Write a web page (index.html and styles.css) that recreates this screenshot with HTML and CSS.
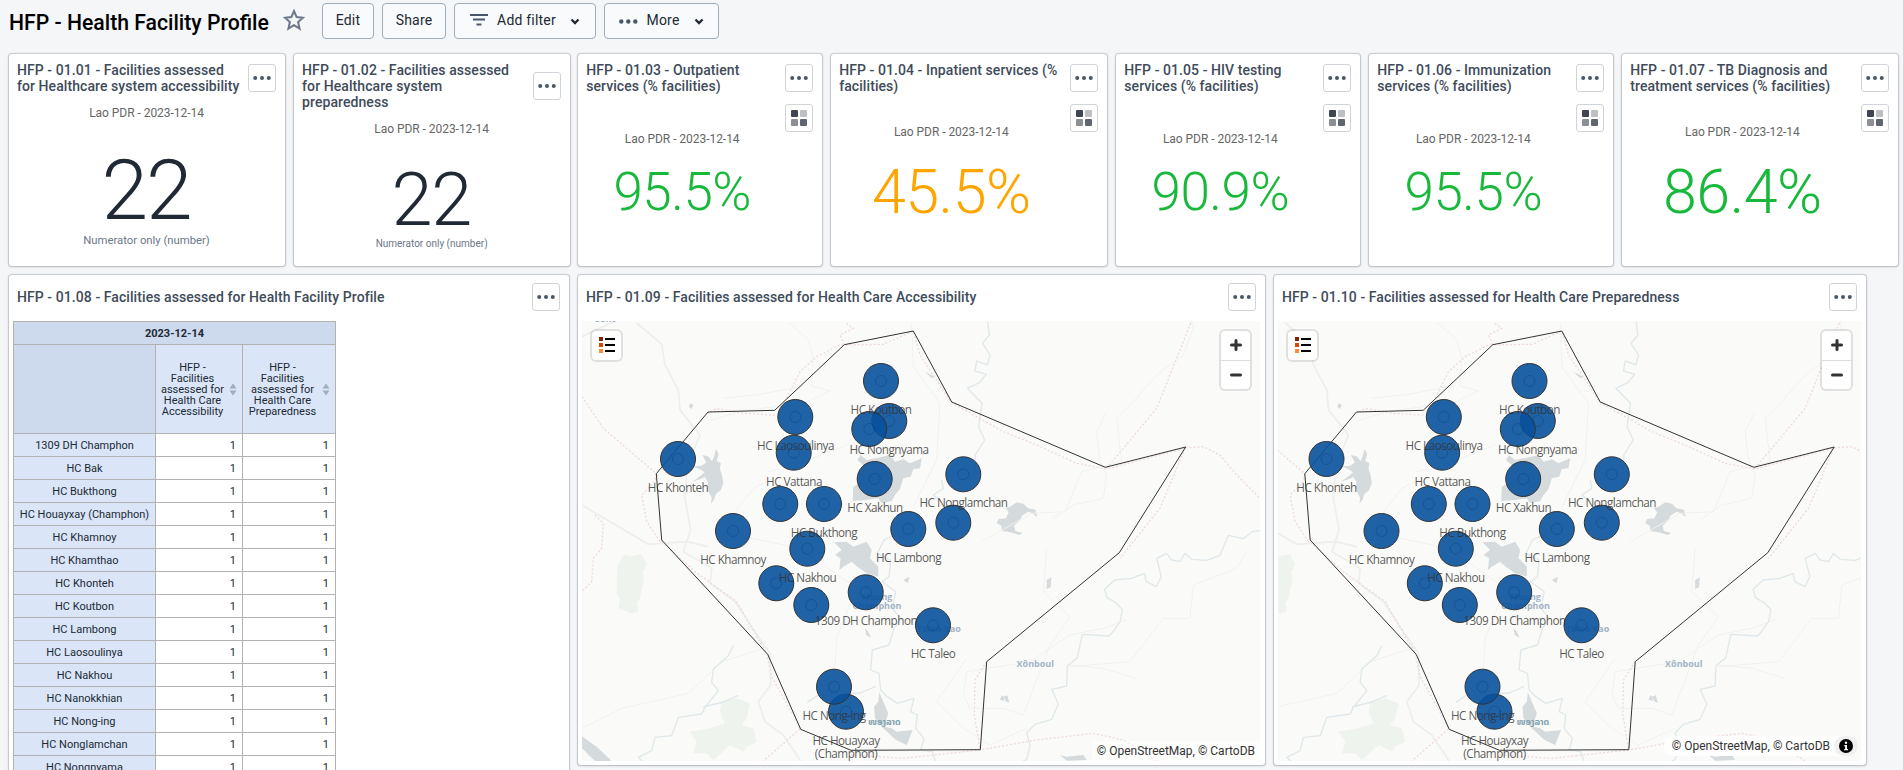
FILE: index.html
```html
<!DOCTYPE html>
<html lang="en">
<head>
<meta charset="utf-8">
<title>HFP - Health Facility Profile</title>
<link rel="stylesheet" href="styles.css">
</head>
<body>
<svg class="defs" width="0" height="0" aria-hidden="true">
  <defs>
    <symbol id="dots" viewBox="0 0 24 24"><circle cx="4.600" cy="12" r="2.200"/><circle cx="12" cy="12" r="2.200"/><circle cx="19.400" cy="12" r="2.200"/></symbol>
    <symbol id="legend" viewBox="0 0 16 16"><rect width="7" height="7" rx="1" fill="#404552"/><rect x="9" width="7" height="7" rx="1" fill="#bdbfc3"/><rect y="9" width="7" height="7" rx="1" fill="#8c9096"/><rect x="9" y="9" width="7" height="7" rx="1" fill="#60666f"/></symbol>
    <symbol id="chevron" viewBox="0 0 10 7"><path d="M1.500 1.500 5 5l3.500-3.500" fill="none" stroke="#212934" stroke-width="2.300"/></symbol>
    <symbol id="layers" viewBox="0 0 16 16"><rect width="4" height="4" fill="#7f2704"/><rect y="6" width="4" height="4" fill="#d94801"/><rect y="12" width="4" height="4" fill="#fd8d3c"/><path d="M6 2h10M6 8h10M6 14h10" stroke="#000" stroke-width="2"/></symbol>
    <g id="basemap">
      <rect x="560" y="300" width="720" height="480" fill="#fafaf8"/>
      <g transform="translate(570 265) scale(.33333)" fill="none">
        <g fill="#d5dadd">
          <path d="M872 571 890 585 925 578 960 570 975 590 1000 583 1020 595 1055 580 1050 610 1030 612 1022 635 1000 640 990 672 975 690 965 708 935 715 925 700 890 705 848 708 850 665 870 655 868 630 880 600 862 585Z"/>
          <path d="m438 552-6 24-6 12-12-14-17-4 12 22-14 10-25 2 22 10 12 8-20 16-17 12 25-8 12-6 10 14-2 22 6 12 7 14-2 18 9-12 6-18 14-10 8-22-4-24-6-18 2-18-12-6 6-20Z"/>
          <path d="M792 832 830 830 850 845 890 830 905 855 900 880 925 905 925 935 890 925 862 905 845 890 820 905 808 915 812 880 795 870 815 855Z"/>
          <path d="M928 1282 940 1310 955 1345 942 1385 965 1390 980 1400 1028 1395 1010 1440 978 1425 935 1385 915 1360 912 1325 925 1310Z"/>
          <path d="m1340 712-20 14-14 2 10 14-8 18-22 2-6 12 14 8 2 16 24 4 28 8 10-6-22-6-4-16 16-14 8-16 18-12 12 4 16 12-6-22-22-4-14-14Z"/>
          <path d="M36 1414 80 1445 125 1488 75 1488 36 1450Z"/>
          <path d="m360 415 10 5-5 12-8-6ZM450 1390l15-10 15 8-12 14-16-4ZM1000 945l18-10-4 20ZM885 1090l10 10 8 18-14-8ZM1065 320l30 15-10 5ZM1470 1470l20 5 50-5 10 15-60 2Z"/>
        </g>
        <g fill="#eff3ed">
          <path d="M160 870 185 874 215 867 230 900 218 920 222 945 208 1005 200 1010 205 1040 185 1045 145 1030 150 1000 140 985 142 905Z"/>
          <path d="M455 1310 500 1300 540 1315 530 1360 515 1380 550 1390 560 1430 530 1445 520 1460 480 1440 430 1485 410 1465 370 1465 380 1430 360 1400 420 1390 465 1375 450 1340Z"/>
        </g>
        <g stroke="#edefed" stroke-width="5">
          <path d="M200 174 275 237 285 300 325 375 330 435 390 510 352 600 345 700 362 795 340 860 425 910 420 955 495 1010 555 1100 600 1165 602 1260 565 1310 585 1370 640 1410 692 1488"/>
          <path d="M36 720 235 838 350 830 415 845M36 215 130 170"/>
        </g>
        <g stroke="#f1f2f0" stroke-width="3">
          <path d="m655 173 60 50 15 60-5 80 55 15-75 35-190 25-100 30M460 400l110-12 130-25M1025 175l5 130 80 110-10 170-70 140M1235 830l150-85 100-5 50-120 120-30-15-130 50-50 70-80 80-60 30-80-25-100 45-120M1610 440l-30 60 10 90 20 40-10 70-90 20-60 40M450 800l240 50 170 120-60 150-10 160M36 1390l120-60 200-45 100-95 140-45M590 620l60-10 180-70M610 640l-60 30-70 90"/>
          <path d="M1670 1065 1600 1090 1500 1110 1380 1190 1190 1220 1180 1290 1200 1330 1300 1330 1360 1350 1440 1140 1500 1055 1420 980 1430 850M1190 1180 1100 1310 1180 1390 1260 1440 1370 1390M1500 1200 1600 1210 1700 1240M1500 1205 1680 1190 1780 1060 1860 1060 1870 960 2000 910 2030 860"/>
        </g>
        <g stroke="#dfe8ea" stroke-width="4" stroke-linejoin="round">
          <path d="m1253 170 5 40-20 25 22 35-8 30-32-12-5 30 34 10-20 24-37 18 44 45-10 70 18 40-28 45-4 95M1115 710l-25-20 30-20-5-25"/>
          <path d="m982 805-40 20-20 40 40 20-5 50-20 15 40 30-10 50 25 30-20 30-15 50-50 15-5 60 25 10 5 50 20 20 30 20 50-15-10 40 20 10-5 40 25 30-10 35 35 5 10 30 60 5 30 40 55 20 25 50"/>
          <path d="m2070 796-25 5-25 20-45-10-25 60-40 15-45-3-20-18-15 25-25-5-15-20-30 15 14 55-15 30-30-15-5-25-40 15-50 5-30 28 7 25 26 15 20 20-6 35-20 30-14 15-80-5-15 70-30 25-2 60-45 10 20 45-20 45-50 15-25 25 10 40-10 40-35 20-10 50"/>
          <path d="m490 1142-15 30-45 40-5 40 20 25-40 50-10 20-70 10-20 55-50 5-10 40-40 20 15 15-5 40 10 25M400 1326l60-15 45-20M712 1312l30-20 130-8 45-20"/>
        </g>
        <g stroke="#efd9dc" stroke-width="4" stroke-dasharray="6 6">
          <path d="M36 395 100 490 259 626 255 650 215 690 230 770 270 830M75 750 100 775 95 850 70 880 65 950 36 980M615 450 520 445 440 430 415 445M650 400 690 320 740 275 810 240 940 238 1030 198 1050 270 1145 413 1300 500 1400 540 1520 595 1610 612 1850 548 1900 545 1950 570 2000 630 2070 700M823 239 810 210 850 190 825 172M1610 610 1760 430 1800 330 1865 168M1845 550 1770 730 1650 880M275 830 375 920 500 1010 590 1165 605 1235 692 1390 580 1488M843 1470 1000 1480 1230 1455 1400 1425 1570 1405 1660 1425 1760 1488M1250 1190 1215 1245 1213 1350 1230 1450"/>
        </g>
        <g fill="#d5dadd"><path d="m1430 945 14-8-2 30-12 5ZM1300 1295l12-4 6 22-14-4ZM1310 1310l-14-20-6 14Z"/></g>
      </g>
      <g class="place">
        <text x="606" y="322" text-anchor="middle">Seno</text>
        <text x="877" y="599.500" text-anchor="middle">Muang</text>
        <text x="877" y="608.500" text-anchor="middle">Champhon</text>
        <text x="939" y="631.500" text-anchor="middle">Taleo Kao</text>
        <text x="1035.300" y="667" text-anchor="middle">Xônboul</text>
        <text x="884.500" y="725" text-anchor="middle" class="lao">ໜອງລາດ</text>
      </g>
    </g>
    <g id="sites">
      <path class="district" d="M913.300 331 951.700 402 1105.300 467.300 1185.700 447 1119.300 552.700 986.700 661.700 980.300 749.700 851 750.300 800.700 729.300 767.700 654.300 661.700 540 656.300 473.700 708 412 774.700 410.300 844.300 344.700Z"/>
      <g class="site">
        <circle cx="889.300" cy="421" r="17.500"/><circle cx="869.300" cy="429" r="17.500"/><circle cx="881" cy="381" r="17.500"/><circle cx="795.300" cy="417" r="17.500"/><circle cx="793.700" cy="452.700" r="17.500"/><circle cx="678" cy="459" r="17.500"/><circle cx="874.700" cy="479" r="17.500"/><circle cx="780.300" cy="504" r="17.500"/><circle cx="824" cy="504" r="17.500"/><circle cx="963.300" cy="474.300" r="17.500"/><circle cx="733" cy="531" r="17.500"/><circle cx="807.300" cy="548.700" r="17.500"/><circle cx="776.300" cy="583.300" r="17.500"/><circle cx="811.300" cy="605" r="17.500"/><circle cx="865.700" cy="592.300" r="17.500"/><circle cx="908.300" cy="529" r="17.500"/><circle cx="953.300" cy="522.700" r="17.500"/><circle cx="933" cy="625.300" r="17.500"/><circle cx="846" cy="711.700" r="17.500"/><circle cx="834" cy="686.700" r="17.500"/>
      </g>
      <g class="ring">
        <circle cx="889.300" cy="421" r="5.500"/><circle cx="869.300" cy="429" r="5.500"/><circle cx="881" cy="381" r="5.500"/><circle cx="795.300" cy="417" r="5.500"/><circle cx="793.700" cy="452.700" r="5.500"/><circle cx="678" cy="459" r="5.500"/><circle cx="874.700" cy="479" r="5.500"/><circle cx="780.300" cy="504" r="5.500"/><circle cx="824" cy="504" r="5.500"/><circle cx="963.300" cy="474.300" r="5.500"/><circle cx="733" cy="531" r="5.500"/><circle cx="807.300" cy="548.700" r="5.500"/><circle cx="776.300" cy="583.300" r="5.500"/><circle cx="811.300" cy="605" r="5.500"/><circle cx="865.700" cy="592.300" r="5.500"/><circle cx="908.300" cy="529" r="5.500"/><circle cx="953.300" cy="522.700" r="5.500"/><circle cx="933" cy="625.300" r="5.500"/><circle cx="846" cy="711.700" r="5.500"/><circle cx="834" cy="686.700" r="5.500"/>
      </g>
    </g>
  </defs>
</svg>

<header class="bar">
  <h1 class="bar-title">HFP - Health Facility Profile</h1>
  <svg class="star" width="22" height="22" viewBox="0 0 22 22"><path d="m11 2 2.600 6.100 6.400.6-4.900 4.300 1.500 6.600L11 16.200l-5.600 3.400 1.500-6.600L2 8.700l6.400-.6z" fill="none" stroke="#6c7787" stroke-width="2"/></svg>
  <button class="btn btn-edit">Edit</button>
  <button class="btn btn-share">Share</button>
  <button class="btn btn-filter"><svg width="18" height="12" viewBox="0 0 18 12"><path d="M0 1h18M3 5.500h12M6.500 10.500h5" stroke="#4a5768" stroke-width="2"/></svg><span>Add filter</span><svg class="chev" width="10" height="7"><use href="#chevron"/></svg></button>
  <button class="btn btn-more"><svg class="dots-wide" width="19" height="5" viewBox="0 0 19 5"><circle cx="2.300" cy="2.500" r="2.200"/><circle cx="9.300" cy="2.500" r="2.200"/><circle cx="16.300" cy="2.500" r="2.200"/></svg><span>More</span><svg class="chev" width="10" height="7"><use href="#chevron"/></svg></button>
</header>

<main class="board">
  <div class="row row-values">
    <section class="card w277">
      <div class="card-head"><h2>HFP - 01.01 - Facilities assessed for Healthcare system accessibility</h2><button class="icon-btn"><svg><use href="#dots"/></svg></button></div>
      <div class="value-body size-xl"><div class="period">Lao PDR - 2023-12-14</div><div class="figure dark">22</div><div class="note">Numerator only (number)</div></div>
    </section>
    <section class="card w277 after-9">
      <div class="card-head"><h2>HFP - 01.02 - Facilities assessed for Healthcare system preparedness</h2><button class="icon-btn"><svg><use href="#dots"/></svg></button></div>
      <div class="value-body size-l"><div class="period">Lao PDR - 2023-12-14</div><div class="figure dark">22</div><div class="note">Numerator only (number)</div></div>
    </section>
    <section class="card w245">
      <div class="card-head"><h2>HFP - 01.03 - Outpatient services (% facilities)</h2><button class="icon-btn"><svg><use href="#dots"/></svg></button></div>
      <div class="with-legend"><div class="value-body size-s"><div class="period">Lao PDR - 2023-12-14</div><div class="figure green">95.5%</div></div><button class="icon-btn legend-btn"><svg><use href="#legend"/></svg></button></div>
    </section>
    <section class="card w277">
      <div class="card-head"><h2>HFP - 01.04 - Inpatient services (% facilities)</h2><button class="icon-btn"><svg><use href="#dots"/></svg></button></div>
      <div class="with-legend"><div class="value-body size-m"><div class="period">Lao PDR - 2023-12-14</div><div class="figure orange">45.5%</div></div><button class="icon-btn legend-btn"><svg><use href="#legend"/></svg></button></div>
    </section>
    <section class="card w245">
      <div class="card-head"><h2>HFP - 01.05 - HIV testing services (% facilities)</h2><button class="icon-btn"><svg><use href="#dots"/></svg></button></div>
      <div class="with-legend"><div class="value-body size-s"><div class="period">Lao PDR - 2023-12-14</div><div class="figure green">90.9%</div></div><button class="icon-btn legend-btn"><svg><use href="#legend"/></svg></button></div>
    </section>
    <section class="card w245">
      <div class="card-head"><h2>HFP - 01.06 - Immunization services (% facilities)</h2><button class="icon-btn"><svg><use href="#dots"/></svg></button></div>
      <div class="with-legend"><div class="value-body size-s"><div class="period">Lao PDR - 2023-12-14</div><div class="figure green">95.5%</div></div><button class="icon-btn legend-btn"><svg><use href="#legend"/></svg></button></div>
    </section>
    <section class="card w277">
      <div class="card-head"><h2>HFP - 01.07 - TB Diagnosis and treatment services (% facilities)</h2><button class="icon-btn"><svg><use href="#dots"/></svg></button></div>
      <div class="with-legend"><div class="value-body size-m"><div class="period">Lao PDR - 2023-12-14</div><div class="figure green">86.4%</div></div><button class="icon-btn legend-btn"><svg><use href="#legend"/></svg></button></div>
    </section>
  </div>

  <div class="row row-items">
    <section class="card card-table">
      <div class="card-head"><h2>HFP - 01.08 - Facilities assessed for Health Facility Profile</h2><button class="icon-btn"><svg><use href="#dots"/></svg></button></div>
      <table class="pivot">
        <colgroup><col class="c1"><col class="c2"><col class="c3"></colgroup>
        <thead>
          <tr class="period-row"><th colspan="3">2023-12-14</th></tr>
          <tr class="dim-row"><th class="blank"></th>
            <th><div class="dim"><span>HFP - Facilities assessed for Health Care Accessibility</span><svg width="8" height="13" viewBox="0 0 8 13"><path d="M4 .5 7.500 5.500h-7zM4 12.500.5 7.500h7z" fill="#a0adba"/></svg></div></th>
            <th><div class="dim"><span>HFP - Facilities assessed for Health Care Preparedness</span><svg width="8" height="13" viewBox="0 0 8 13"><path d="M4 .5 7.500 5.500h-7zM4 12.500.5 7.500h7z" fill="#a0adba"/></svg></div></th></tr>
        </thead>
        <tbody>
          <tr><th>1309 DH Champhon</th><td>1</td><td>1</td></tr>
          <tr><th>HC Bak</th><td>1</td><td>1</td></tr>
          <tr><th>HC Bukthong</th><td>1</td><td>1</td></tr>
          <tr><th>HC Houayxay (Champhon)</th><td>1</td><td>1</td></tr>
          <tr><th>HC Khamnoy</th><td>1</td><td>1</td></tr>
          <tr><th>HC Khamthao</th><td>1</td><td>1</td></tr>
          <tr><th>HC Khonteh</th><td>1</td><td>1</td></tr>
          <tr><th>HC Koutbon</th><td>1</td><td>1</td></tr>
          <tr><th>HC Lambong</th><td>1</td><td>1</td></tr>
          <tr><th>HC Laosoulinya</th><td>1</td><td>1</td></tr>
          <tr><th>HC Nakhou</th><td>1</td><td>1</td></tr>
          <tr><th>HC Nanokkhian</th><td>1</td><td>1</td></tr>
          <tr><th>HC Nong-ing</th><td>1</td><td>1</td></tr>
          <tr><th>HC Nonglamchan</th><td>1</td><td>1</td></tr>
          <tr><th>HC Nongnyama</th><td>1</td><td>1</td></tr>
        </tbody>
      </table>
    </section>

    <section class="card card-map-a">
      <div class="card-head"><h2>HFP - 01.09 - Facilities assessed for Health Care Accessibility</h2><button class="icon-btn"><svg><use href="#dots"/></svg></button></div>
      <div class="map">
        <svg class="canvas" width="678" height="440" viewBox="582 321 678 440">
          <use href="#basemap"/><use href="#sites"/>
          <g class="labels">
            <text x="881" y="414">HC Koutbon</text><text x="795.500" y="450">HC Laosoulinya</text><text x="889" y="454">HC Nongnyama</text><text x="794" y="485.500">HC Vattana</text><text x="678" y="492">HC Khonteh</text><text x="875" y="512">HC Xakhun</text><text x="963.500" y="507">HC Nonglamchan</text><text x="824" y="537">HC Bukthong</text><text x="733" y="563.500">HC Khamnoy</text><text x="908.500" y="562">HC Lambong</text><text x="807.500" y="581.500">HC Nakhou</text><text x="866" y="625">1309 DH Champhon</text><text x="933" y="658">HC Taleo</text><text x="834" y="719.500">HC Nong-ing</text><text x="846" y="744.500">HC Houayxay</text><text x="846" y="757.500">(Champhon)</text>
          </g>
        </svg>
        <div class="ctl ctl-layers"><svg width="16" height="16"><use href="#layers"/></svg></div>
        <div class="ctl ctl-zoom"><span><svg width="12" height="12"><path d="M6 1.500v9M1.500 6h9" stroke="#333" stroke-width="3" stroke-linecap="round"/></svg></span><span><svg width="12" height="12"><path d="M1.500 6h9" stroke="#333" stroke-width="3" stroke-linecap="round"/></svg></span></div>
        <div class="credit">© OpenStreetMap, © CartoDB</div>
      </div>
    </section>

    <section class="card card-map-b">
      <div class="card-head"><h2>HFP - 01.10 - Facilities assessed for Health Care Preparedness</h2><button class="icon-btn"><svg><use href="#dots"/></svg></button></div>
      <div class="map">
        <svg class="canvas" width="583" height="440" viewBox="629.500 321 583 440">
          <use href="#basemap"/><use href="#sites"/>
          <g class="labels">
            <text x="881" y="414">HC Koutbon</text><text x="795.500" y="450">HC Laosoulinya</text><text x="889" y="454">HC Nongnyama</text><text x="794" y="485.500">HC Vattana</text><text x="678" y="492">HC Khonteh</text><text x="875" y="512">HC Xakhun</text><text x="963.500" y="507">HC Nonglamchan</text><text x="824" y="537">HC Bukthong</text><text x="733" y="563.500">HC Khamnoy</text><text x="908.500" y="562">HC Lambong</text><text x="807.500" y="581.500">HC Nakhou</text><text x="866" y="625">1309 DH Champhon</text><text x="933" y="658">HC Taleo</text><text x="834" y="719.500">HC Nong-ing</text><text x="846" y="744.500">HC Houayxay</text><text x="846" y="757.500">(Champhon)</text>
          </g>
        </svg>
        <div class="ctl ctl-layers"><svg width="16" height="16"><use href="#layers"/></svg></div>
        <div class="ctl ctl-zoom"><span><svg width="12" height="12"><path d="M6 1.500v9M1.500 6h9" stroke="#333" stroke-width="3" stroke-linecap="round"/></svg></span><span><svg width="12" height="12"><path d="M1.500 6h9" stroke="#333" stroke-width="3" stroke-linecap="round"/></svg></span></div>
        <div class="credit credit-pill">© OpenStreetMap, © CartoDB<span class="info"><svg width="14" height="14" viewBox="0 0 14 14"><circle cx="7" cy="7" r="7" fill="#000"/><circle cx="7" cy="3.700" r="1.200" fill="#fff"/><path d="M5.300 6H8v4h1v1.200H5.200V10h1V7.200h-.9z" fill="#fff"/></svg></span></div>
      </div>
    </section>
  </div>
</main>
</body>
</html>
```

FILE: styles.css
```css
* { box-sizing: border-box; }

html, body { height: 770px; overflow: hidden; }

body {
  margin: 0;
  background: #f4f6f8;
  font-family: Roboto, "Liberation Sans", sans-serif;
  color: #212934;
}

.defs { display: block; height: 0; }

/* Title bar */
.bar { display: flex; height: 54px; padding: 3px 0 0 9px; }

.bar-title {
  width: 261px;
  margin: 0;
  font-size: 21.200px;
  font-weight: 500;
  line-height: 40px;
  color: #000;
  white-space: nowrap;
}

.star { margin: 6px 17px 0 13px; flex: none; }

.btn {
  display: flex;
  align-items: center;
  justify-content: center;
  height: 36px;
  margin: 0 8px 0 0;
  padding: 0 0 2px;
  border: 1px solid #a0adba;
  border-radius: 4px;
  background: #f9fafb;
  font: 400 14px/20px Roboto, sans-serif;
  letter-spacing: .2px;
  color: #212934;
}

.btn-edit { width: 52px; }
.btn-share { width: 64px; }
.btn-filter { width: 142px; }
.btn-filter span { margin: 0 14px 0 9px; }
.btn-more { width: 115px; }
.btn-more span { margin: 0 14px 0 8px; }
.chev { margin-top: 3px; }
.dots-wide { fill: #4a5768; margin-top: 2px; }

/* Board */
.board { display: flex; flex-direction: column; gap: 9px; padding-left: 8.500px; }
.row { display: flex; }
.row-values { gap: 9px; height: 211.500px; }
.row-items { gap: 9px; }

.card {
  flex: none;
  padding: 8px 8.500px 0;
  background: #fff;
  border-radius: 3px;
  box-shadow: 0 0 1px .5px rgba(33, 41, 52, .2), 0 1px 3px rgba(33, 41, 52, .12);
}

.w277 { width: 276.100px; }
.w245 { width: 244px; }
.after-9 { margin-right: -1px; }
.card-table { width: 560px; height: 520px; }
.card-map-a { width: 687px; height: 490.500px; }
.card-map-b { width: 592px; height: 490.500px; }

.card-head { display: flex; align-items: center; gap: 8px; }

.card-head h2 {
  flex: 1;
  margin: 0 -4px 0 0;
  font-size: 14px;
  font-weight: 500;
  line-height: 16px;
  letter-spacing: .075px;
  color: #404b5a;
}

.icon-btn {
  display: flex;
  align-items: center;
  justify-content: center;
  width: 28px;
  height: 28px;
  flex: none;
  padding: 0;
  border: 1px solid #d0d4d9;
  border-radius: 3px;
  background: #fff;
}

.icon-btn svg { width: 22px; height: 22px; fill: #4a5768; }

/* Single value visuals */
.value-body { text-align: center; white-space: nowrap; }
.with-legend { display: flex; }
.with-legend .value-body { flex: 1; margin-left: -4px; }
.legend-btn { margin-top: 10px; }
.legend-btn svg { width: 16px; height: 16px; }
.with-legend .value-body + .legend-btn { margin-left: 3px; }

.period { font-size: 12px; line-height: 14px; color: #666; letter-spacing: -.04px; }
.note { color: #6c7787; }
.figure { font-weight: 300; line-height: 80px; }
.dark { color: #212934; }
.green { color: #18b83b; }
.orange { color: #ffa500; }

.size-xl .period, .size-l .period { padding-top: 11.500px; }
.size-xl .figure { font-size: 84px; margin-top: 31px; letter-spacing: -2px; text-indent: -1px; }
.size-xl .note { font-size: 11.300px; line-height: 14px; margin-top: 3px; }
.size-l .figure { font-size: 74px; margin-top: 24.500px; letter-spacing: -1.500px; text-indent: -1px; }
.size-l .note { font-size: 10px; line-height: 14px; margin-top: -3.500px; }
.size-s .period { padding-top: 38px; }
.size-s .figure { font-size: 53px; margin-top: 6px; letter-spacing: -.5px; }
.size-m .period { padding-top: 31px; }
.size-m .figure { font-size: 61px; margin-top: 12.500px; letter-spacing: -.5px; }

/* Pivot table */
.pivot {
  width: 323px;
  margin: 10px 0 0 -4px;
  border-collapse: collapse;
  table-layout: fixed;
  background: #fff;
  font-size: 11px;
}

.c1 { width: 142px; }
.c2 { width: 87px; }
.c3 { width: 93px; }

.pivot th, .pivot td {
  height: 23px;
  padding: 2px 6px 0;
  border: 1px solid #b2b2b2;
  line-height: 13px;
  font-weight: 400;
  color: #212934;
}

.pivot th { background: #dae6f8; white-space: nowrap; padding: 2px 0 0; }
.pivot td { text-align: right; }
.pivot .period-row th { background: #cddaed; font-weight: 700; }
.pivot .dim-row th { height: 89px; background: #dae6f8; }
.pivot .dim-row .blank { background: #cddaed; }
.dim { display: flex; align-items: center; justify-content: space-between; padding: 0 5px 0 4px; }
.dim span { flex: 1; line-height: 11px; white-space: normal; }
.dim svg { flex: none; margin-left: 4px; }

/* Maps */
.map { position: relative; height: 440px; margin: 10px -4px 0; overflow: hidden; }
.canvas { display: block; }

.place { font: 700 9px "Open Sans", sans-serif; fill: #a3b3c4; }
.place .lao { font-family: "Noto Sans Lao", "DejaVu Sans", sans-serif; font-size: 9px; fill: #83a3ae; }
.district { fill: none; stroke: #333; stroke-width: 1; }
.site { fill: #08519c; fill-opacity: .9; stroke: #333; stroke-width: 1; }
.ring { fill: none; stroke: #0b4080; stroke-opacity: .55; stroke-width: .8; }
.labels { font: 400 11.700px "Open Sans", "Noto Sans", sans-serif; letter-spacing: -.5px; fill: #333; fill-opacity: .82; text-anchor: middle; }

.ctl {
  position: absolute;
  top: 8px;
  border: 2px solid rgba(0, 0, 0, .1);
  border-radius: 6px;
  background: #fff;
  background-clip: padding-box;
}

.ctl-layers { left: 8px; width: 33px; height: 33px; display: flex; align-items: center; justify-content: center; }
.ctl-zoom { right: 8px; width: 33px; height: 62px; }
.ctl-zoom span { display: flex; align-items: center; justify-content: center; height: 29px; }
.ctl-zoom span + span { border-top: 1px solid #ddd; }

.credit {
  position: absolute;
  right: 0;
  bottom: 0;
  height: 20px;
  padding: 0 5px;
  background: rgba(255, 255, 255, .5);
  font-size: 12px;
  line-height: 20px;
  color: #333;
  white-space: nowrap;
}

.credit-pill {
  right: 3px;
  bottom: 5px;
  display: flex;
  padding: 0 0 0 8px;
  border-radius: 12px;
  background: #fff;
}

.info {
  display: flex;
  align-items: center;
  justify-content: center;
  width: 24px;
  height: 20px;
  margin-left: 4px;
  border-radius: 12px;
  background: #f0f0f0;
}
```
